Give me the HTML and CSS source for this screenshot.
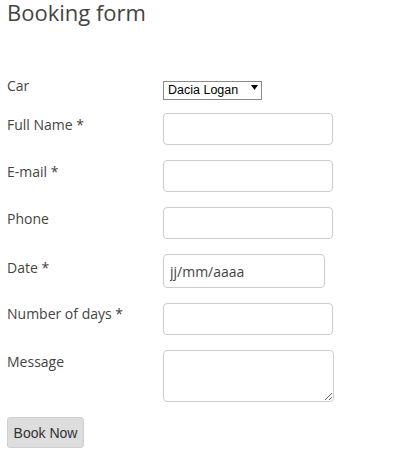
FILE: index.html
```html
<!DOCTYPE html>
<html>
<head>
<meta charset="utf-8">
<title>Booking form</title>
<link rel="stylesheet" href="styles.css">
</head>
<body>
<h1 class="title">Booking form</h1>
<form class="form">
  <div class="row row-car">
    <label class="label label-car">Car</label>
    <div class="select-wrap">
      <select class="select"><option>Dacia Logan</option></select>
      <svg class="select-arrow" width="7" height="5" viewBox="0 0 7 5"><path d="M0 0H7L3.5 5Z" fill="#000"/></svg>
    </div>
  </div>
  <div class="row">
    <label class="label">Full Name *</label>
    <input class="input" type="text">
  </div>
  <div class="row">
    <label class="label">E-mail *</label>
    <input class="input" type="text">
  </div>
  <div class="row">
    <label class="label">Phone</label>
    <input class="input" type="text">
  </div>
  <div class="row">
    <label class="label label-date">Date *</label>
    <input class="input input-date" type="text" value="jj/mm/aaaa">
  </div>
  <div class="row">
    <label class="label label-num">Number of days *</label>
    <input class="input" type="text">
  </div>
  <div class="row">
    <label class="label">Message</label>
    <textarea class="textarea"></textarea>
  </div>
  <button class="button" type="button">Book Now</button>
</form>
</body>
</html>
```

FILE: styles.css
```css
html, body {
  margin: 0;
  padding: 0;
  background: #fff;
}
body {
  padding: 0 7px;
  font-family: "Open Sans", "Liberation Sans", sans-serif;
  color: #444;
}
.title {
  margin: 0;
  font-size: 22px;
  font-weight: 400;
  line-height: 25px;
  color: #444;
}
.form {
  margin-top: 52px;
  display: flex;
  flex-direction: column;
  align-items: flex-start;
}
.row {
  display: flex;
  align-items: flex-start;
  margin-bottom: 15px;
}
.row-car {
  margin-bottom: 17px;
}
.label {
  width: 156px;
  flex-shrink: 0;
  font-size: 14px;
  line-height: 20px;
  padding-top: 2px;
  color: #444;
}
.label-car {
  padding-top: 0;
  margin-top: -1px;
}
.label-date {
  padding-top: 4px;
}
.label-num {
  padding-top: 1px;
}
.select-wrap {
  position: relative;
  width: 99px;
  height: 19px;
}
.select {
  appearance: none;
  -webkit-appearance: none;
  box-sizing: border-box;
  width: 99px;
  height: 19px;
  margin: 0;
  padding: 0 0 0 4px;
  border: 1px solid #8a8a8a;
  border-radius: 0;
  background: #fff;
  font-family: "Liberation Sans", Arial, sans-serif;
  font-size: 12.5px;
  line-height: 17px;
  color: #000;
}
.select-arrow {
  position: absolute;
  left: 88px;
  top: 8px;
  pointer-events: none;
}
.input {
  box-sizing: border-box;
  width: 170px;
  height: 32px;
  margin: 0;
  padding: 0 6px;
  border: 1px solid #ccc;
  border-radius: 4px;
  background: #fff;
  font-family: "Open Sans", sans-serif;
  font-size: 14px;
  color: #444;
  outline: none;
}
.input-date {
  width: 162px;
  height: 34px;
}
.textarea {
  box-sizing: border-box;
  width: 171px;
  height: 52px;
  margin: 0;
  padding: 4px 6px;
  border: 1px solid #ccc;
  border-radius: 4px;
  background: #fff;
  font-family: "Open Sans", sans-serif;
  font-size: 14px;
  color: #444;
}
.button {
  box-sizing: border-box;
  width: 77px;
  height: 31px;
  margin: 0;
  padding: 0;
  border: 1px solid #cfcfcf;
  border-radius: 3px;
  background: #ddd;
  font-family: "Liberation Sans", Arial, sans-serif;
  font-size: 14px;
  color: #333;
}
```
